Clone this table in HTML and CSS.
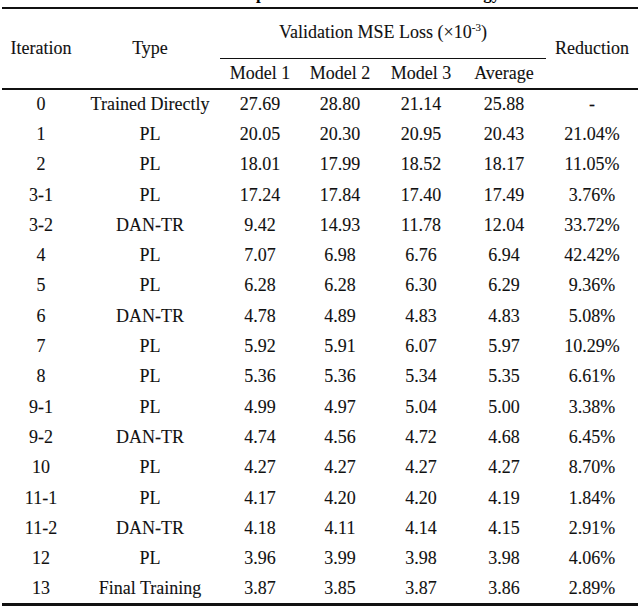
FILE: index.html
```html
<!DOCTYPE html>
<html lang="en">
<head>
<meta charset="utf-8">
<title>Validation MSE Loss per Iteration</title>
<link rel="stylesheet" href="styles.css">
</head>
<body>
<div class="caption">Table 3. The Step Results of the Iterative Strategy</div>
<table class="results">
  <colgroup>
    <col class="c-iter"><col class="c-type"><col class="c-m1"><col class="c-m2"><col class="c-m3"><col class="c-avg"><col class="c-red">
  </colgroup>
  <thead>
    <tr class="h1">
      <th rowspan="2">Iteration</th>
      <th rowspan="2">Type</th>
      <th colspan="4" class="group">Validation MSE Loss (×10<sup>-3</sup>)</th>
      <th rowspan="2">Reduction</th>
    </tr>
    <tr class="h2">
      <th>Model 1</th><th>Model 2</th><th>Model 3</th><th>Average</th>
    </tr>
  </thead>
  <tbody>
    <tr><td>0</td><td>Trained Directly</td><td>27.69</td><td>28.80</td><td>21.14</td><td>25.88</td><td>-</td></tr>
    <tr><td>1</td><td>PL</td><td>20.05</td><td>20.30</td><td>20.95</td><td>20.43</td><td>21.04%</td></tr>
    <tr><td>2</td><td>PL</td><td>18.01</td><td>17.99</td><td>18.52</td><td>18.17</td><td>11.05%</td></tr>
    <tr><td>3-1</td><td>PL</td><td>17.24</td><td>17.84</td><td>17.40</td><td>17.49</td><td>3.76%</td></tr>
    <tr><td>3-2</td><td>DAN-TR</td><td>9.42</td><td>14.93</td><td>11.78</td><td>12.04</td><td>33.72%</td></tr>
    <tr><td>4</td><td>PL</td><td>7.07</td><td>6.98</td><td>6.76</td><td>6.94</td><td>42.42%</td></tr>
    <tr><td>5</td><td>PL</td><td>6.28</td><td>6.28</td><td>6.30</td><td>6.29</td><td>9.36%</td></tr>
    <tr><td>6</td><td>DAN-TR</td><td>4.78</td><td>4.89</td><td>4.83</td><td>4.83</td><td>5.08%</td></tr>
    <tr><td>7</td><td>PL</td><td>5.92</td><td>5.91</td><td>6.07</td><td>5.97</td><td>10.29%</td></tr>
    <tr><td>8</td><td>PL</td><td>5.36</td><td>5.36</td><td>5.34</td><td>5.35</td><td>6.61%</td></tr>
    <tr><td>9-1</td><td>PL</td><td>4.99</td><td>4.97</td><td>5.04</td><td>5.00</td><td>3.38%</td></tr>
    <tr><td>9-2</td><td>DAN-TR</td><td>4.74</td><td>4.56</td><td>4.72</td><td>4.68</td><td>6.45%</td></tr>
    <tr><td>10</td><td>PL</td><td>4.27</td><td>4.27</td><td>4.27</td><td>4.27</td><td>8.70%</td></tr>
    <tr><td>11-1</td><td>PL</td><td>4.17</td><td>4.20</td><td>4.20</td><td>4.19</td><td>1.84%</td></tr>
    <tr><td>11-2</td><td>DAN-TR</td><td>4.18</td><td>4.11</td><td>4.14</td><td>4.15</td><td>2.91%</td></tr>
    <tr><td>12</td><td>PL</td><td>3.96</td><td>3.99</td><td>3.98</td><td>3.98</td><td>4.06%</td></tr>
    <tr><td>13</td><td>Final Training</td><td>3.87</td><td>3.85</td><td>3.87</td><td>3.86</td><td>2.89%</td></tr>
  </tbody>
</table>
</body>
</html>
```
FILE: styles.css
```css
html, body {
  margin: 0;
  padding: 0;
  background: #ffffff;
}

body {
  font-family: "Liberation Serif", "Tinos", "Times New Roman", "DejaVu Serif", serif;
  color: #000000;
  width: 640px;
  overflow: hidden;
}

.caption {
  font-weight: bold;
  font-size: 17px;
  line-height: 18px;
  height: 18px;
  margin-top: -15px;
  text-align: center;
  white-space: nowrap;
}

.results {
  margin: 4px 0 0 2px;
  width: 636px;
  border-collapse: collapse;
  table-layout: fixed;
  font-size: 18px;
  color: #111;
  -webkit-text-stroke: 0.1px #111;
  border-top: 2px solid #111;
  border-bottom: 3px solid #111;
}

.c-iter { width: 78px; }
.c-type { width: 140px; }
.c-m1 { width: 80px; }
.c-m2 { width: 80px; }
.c-m3 { width: 82px; }
.c-avg { width: 84px; }
.c-red { width: 92px; }

.results th,
.results td {
  padding: 0;
  text-align: center;
  vertical-align: middle;
  font-weight: normal;
  white-space: nowrap;
}

.results thead tr.h1 { height: 50px; }
.results thead tr.h2 { height: 31px; }

.results th.group {
  border-bottom: 1px solid #111;
  padding-bottom: 2px;
}

.results thead tr.h2 th {
  border-bottom: 2px solid #111;
}

.results thead tr.h1 th[rowspan] {
  border-bottom: 2px solid #111;
}

.results sup {
  font-size: 11px;
  line-height: 0;
  vertical-align: 7px;
}

.results tbody tr { height: 30.3px; }
```
